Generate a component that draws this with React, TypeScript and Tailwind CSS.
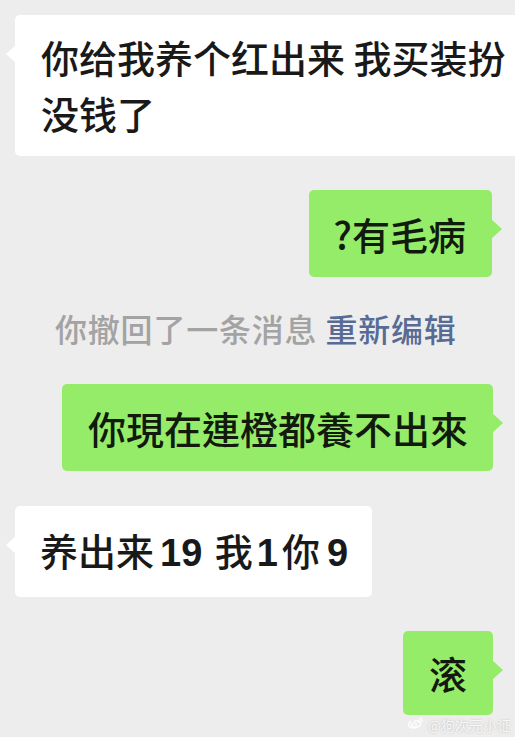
import React from "react";

type Side = "left" | "right";

function Tail({ side }: { side: Side }) {
  if (side === "left") {
    return (
      <span
        aria-hidden
        className="absolute -left-[9px] top-[30px] h-0 w-0 border-y-[9px] border-r-[10px] border-y-transparent border-r-white"
      />
    );
  }
  return (
    <span
      aria-hidden
      className="absolute -right-[10px] top-[29px] h-0 w-0 border-y-[10px] border-l-[11px] border-y-transparent border-l-[#95ec69]"
    />
  );
}

function WeiboMark() {
  return (
    <svg viewBox="0 0 24 20" className="h-[15px] w-[18px]" fill="none">
      <path
        d="M9.6 6.2c2.6-2 5-2.3 5.6-1 .3.6.1 1.3-.2 2 1.5-.5 3.4-.4 3.4 1.4 0 2.8-4.2 6.2-9.3 6.2C5.3 14.8 2 13 2 10.3c0-1.6 1.3-3.4 3.2-4.6"
        stroke="white"
        strokeWidth="1.6"
        strokeLinecap="round"
      />
      <ellipse cx="9" cy="11" rx="3.6" ry="2.6" stroke="white" strokeWidth="1.4" />
      <circle cx="8.4" cy="11.2" r="1" fill="white" />
      <path d="M16.5 2.2c2.3-.2 4.2 1.5 4 3.8" stroke="white" strokeWidth="1.4" strokeLinecap="round" />
      <path d="M16.3 4.3c1.1 0 2 .8 1.9 1.9" stroke="white" strokeWidth="1.3" strokeLinecap="round" />
    </svg>
  );
}

const num = "font-['Liberation_Sans',sans-serif] font-bold";

export default function App() {
  return (
    <div className="relative h-[737px] w-[515px] overflow-hidden bg-[#ededed] font-['Noto_Sans_CJK_SC','Noto_Sans_CJK_TC',sans-serif] font-medium text-[#191919]">
      <div className="flex flex-col pt-[15px]">
        {/* incoming */}
        <div className="relative ml-[15px] w-[510px] rounded-[5px] bg-white pb-[15px] pl-[26px] pt-[14px] text-[38px] leading-[56px]">
          你给我养个红出来 我买装扮
          <br />
          没钱了
          <Tail side="left" />
        </div>

        {/* outgoing */}
        <div className="relative mr-[23px] mt-[34px] self-end rounded-[5px] bg-[#95ec69] pb-[17px] pl-[24px] pr-[26px] pt-[18px] text-[38px] leading-[52px] text-[#111a0c]">
          ?有毛病
          <Tail side="right" />
        </div>

        {/* recalled */}
        <div className="ml-[55px] mt-[29px] text-[32px] leading-[44px] tracking-[0.8px] text-[#a3a3a3]">
          你撤回了一条消息 <span className="text-[#576b95]">重新编辑</span>
        </div>

        <div className="relative mr-[22px] mt-[34px] self-end rounded-[5px] bg-[#95ec69] pb-[17px] pl-[26px] pr-[25px] pt-[18px] font-['Noto_Sans_CJK_TC','Noto_Sans_CJK_SC',sans-serif] text-[38px] leading-[52px] text-[#111a0c]">
          你現在連橙都養不出來
          <Tail side="right" />
        </div>

        {/* incoming */}
        <div className="relative ml-[15px] mt-[35px] w-[357px] rounded-[5px] bg-white pb-[18px] pl-[25px] pt-[18px] text-[38px] leading-[52px]">
          养出来<span className={`${num} ml-[6px] mr-[4px]`}>19</span> 我<span className={`${num} mx-[4px]`}>1</span>你<span className={`${num} ml-[7px]`}>9</span>
          <Tail side="left" />
        </div>

        {/* outgoing */}
        <div className="relative mr-[22px] mt-[34px] flex h-[84px] w-[90px] items-center justify-center self-end rounded-[5px] bg-[#95ec69] text-[38px] leading-[52px] text-[#111a0c]">
          滚
          <Tail side="right" />
        </div>
      </div>

      {/* watermark */}
      <div className="absolute bottom-[5px] right-[4px] flex items-center gap-[3px] text-[14px] font-normal leading-none text-white/85 [text-shadow:0_0_2px_rgba(0,0,0,0.25)]">
        <WeiboMark />
        <span>@狗次元小证</span>
      </div>
    </div>
  );
}
